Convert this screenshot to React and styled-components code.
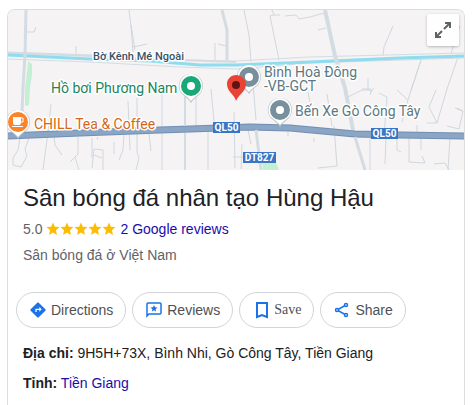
import React from "react";
import styled, { createGlobalStyle } from "styled-components";

const GlobalStyle = createGlobalStyle`
  * { box-sizing: border-box; }
  body {
    margin: 0;
    background: #fff;
    font-family: "Liberation Sans", Arial, sans-serif;
    font-size: 14px;
    color: #202124;
  }
`;

const Page = styled.main`
  display: flex;
  flex-direction: column;
  min-height: 100vh;
  padding: 9px 7px 0;
`;

const Card = styled.article`
  flex: 1;
  border: 1px solid #dadce0;
  border-bottom: 0;
  border-radius: 8px 8px 0 0;
  overflow: hidden;
`;

const MapFrame = styled.section`
  position: relative;
  height: 160px;
  background: #f5f3f4;
`;

const MapSvg = styled.svg`
  display: block;
  width: 100%;
  height: 100%;
  font-family: Roboto, sans-serif;
`;

const MapLabel = styled.text`
  font-size: ${(p) => p.$size || 14}px;
  font-weight: ${(p) => p.$weight || 400};
  fill: ${(p) => p.$color};
  stroke: #fff;
  stroke-width: 3px;
  stroke-linejoin: round;
  paint-order: stroke;
`;

const ShieldText = styled.text`
  font-size: 10px;
  font-weight: 700;
  fill: #fff;
  text-anchor: middle;
`;

const ExpandButton = styled.button`
  position: absolute;
  top: 4px;
  right: 5px;
  display: grid;
  place-items: center;
  width: 32px;
  height: 32px;
  padding: 0;
  border: 0;
  border-radius: 2px;
  background: rgba(255, 255, 255, 0.9);
  box-shadow: 0 1px 3px rgba(0, 0, 0, 0.25);
`;

const Summary = styled.header`
  padding: 12px 15px 0;
`;

const Title = styled.h1`
  margin: 0;
  font-size: 24px;
  font-weight: 400;
  line-height: 32px;
`;

const Rating = styled.div`
  display: flex;
  align-items: center;
  gap: 4px;
  margin-top: 2px;
  line-height: 26px;
  color: #5f6368;
`;

const Stars = styled.span`
  display: flex;
`;

const Category = styled.p`
  margin: 0;
  line-height: 26px;
  color: #5f6368;
`;

const TextLink = styled.a`
  color: #1a0dab;
  text-decoration: none;
`;

const Actions = styled.nav`
  display: flex;
  flex-wrap: wrap;
  gap: 6px;
  padding: 24px 8px 0;
`;

const ActionButton = styled.button`
  display: flex;
  align-items: center;
  gap: ${(p) => (p.$serif ? 2 : 5)}px;
  height: 36px;
  padding: 0 12px 0 ${(p) => (p.$serif ? 12 : 13)}px;
  border: 1px solid #d2d4d7;
  border-radius: 18px;
  background: #fff;
  color: #4d5156;
  font-family: ${(p) =>
    p.$serif ? '"Liberation Serif", "Times New Roman", serif' : "inherit"};
  font-size: 14px;
`;

const Facts = styled.section`
  padding: 10px 15px;
`;

const Fact = styled.p`
  margin: 0;
  line-height: 30px;
`;

const lightRoads = [
  "M25 32H34L36 27",
  "M76 54V46",
  "M129 10L131 26L133 52",
  "M131 25L135 50M133 47L147 44",
  "M215 60V43M218 44L226 46",
  "M244 10L249 35L251 62",
  "M272 10L274 15L270 16L279 60",
  "M274 15H280M285 16L296 15L299 19L310 17L324 13",
  "M318 30L326 28",
  "M393 26L384 47L383 56",
  "M460 26L455 40L451 54",
  "M421 60L411 90M458 57L447 89L437 123",
  "M368 78V90M362 89H371M374 88L370 92",
  "M348 97L354 94L362 90H372L370 95",
  "M397 90L408 100L421 60M408 100L402 122",
  "M379 93L387 97L384 136",
  "M436 90L429 107L437 123H427",
  "M455 108L462 111M447 126L459 129L463 111L457 108",
  "M51 104L48 132L43 170",
  "M20 138L18 150L13 158V165L21 167L27 156L25 149L29 138",
  "M54 137L55 145L62 155",
  "M78 137V154L70 162M75 157L79 170",
  "M92 138V158M97 137L98 140",
  "M92 168L94 149L103 150V170M94 155L102 158",
  "M114 142V154M124 135L123 150L119 160",
  "M128 101L130 150M137 98V152L139 158L136 170",
  "M149 134L151 151",
  "M162 88V170M208 130V170",
  "M196 90V127M211 89L214 121M234 112L235 168M242 144L241 169M233 157H243",
  "M253 83L256 120M248 130L251 144",
  "M288 130V136M308 92L310 102",
  "M327 94L332 126M334 126L337 166L318 168",
  "M370 138V170M386 137L385 164",
  "M397 137V150L401 152M409 137V162L425 163L422 156",
  "M421 137V150M450 138L448 170M434 164L445 163L449 170",
  "M314 138V142M417 125V132",
];

function MapPin({ x, y, color, children }) {
  return (
    <g transform={`translate(${x} ${y})`}>
      <path
        d="M0 17C-2 13-6 11-9 8C-16-1-10-12 0-12S16-1 9 8C6 11 2 13 0 17Z"
        fill="#b9c2c8"
      />
      <path
        d="M0 15C-2 12-6 10-9 7C-15-1-9-12 0-12S15-1 9 7C6 10 2 12 0 15Z"
        fill="#fff"
      />
      <circle r="10" fill={color} />
      {children || <circle r="4" fill="#fff" />}
    </g>
  );
}

function RoadShield({ x, y, width, children }) {
  return (
    <g>
      <rect x={x} y={y} width={width} height="11" fill="#3975c5" />
      <ShieldText x={x + width / 2} y={y + 9}>
        {children}
      </ShieldText>
    </g>
  );
}

function PlaceMap() {
  return (
    <MapSvg
      viewBox="8 10 456 160"
      preserveAspectRatio="xMidYMid slice"
      role="img"
      aria-label="Map"
    >
      <rect x="8" y="10" width="456" height="160" fill="#f5f3f4" />
      <path d="M28 61L32 64V75L30 88L29 105L25 106L25 88L27 72Z" fill="#c4efd3" />
      <path d="M262 160H275L279 170H263Z" fill="#c4efd3" />
      <g fill="none" stroke="#cfd8df" strokeWidth="1">
        {lightRoads.map((d) => (
          <path key={d} d={d} />
        ))}
      </g>
      <g fill="none">
        <path
          d="M8 52L92 55L180 60L236 61L310 57L464 53M8 59L90 62L180 67L236 69L310 63L464 58"
          stroke="#d3dce3"
          strokeWidth="1"
        />
        <path d="M8 53L92 56L180 60L236 62" stroke="#d3dce3" strokeWidth="2" />
        <path
          d="M8 55L90 59L150 61L200 65L236 65L310 62L400 58L464 56"
          stroke="#8fdcef"
          strokeWidth="3"
        />
        <path
          d="M8 136L80 133L160 130L250 127L290 128L355 134L400 135L464 136"
          stroke="#718eb5"
          strokeWidth="7"
        />
        <path
          d="M8 136L80 133L160 130L250 127L290 128L355 134L400 135L464 136"
          stroke="#8ba5c4"
          strokeWidth="5"
        />
      </g>
      <g fill="none" stroke="#d3dce3" strokeWidth="3">
        <path d="M26 10L25 55L23 88L22 112" />
        <path d="M222 10L227 30V60" />
        <path d="M325 10L335 56L345 88L353 130" strokeWidth="4" />
        <path d="M355 137L365 170" />
        <path d="M185 86V126M185 133V170" strokeWidth="2" />
        <path d="M256 130L261 170" />
      </g>

      <RoadShield x={213} y={122} width={27}>QL50</RoadShield>
      <RoadShield x={371} y={128} width={27}>QL50</RoadShield>
      <RoadShield x={243} y={152} width={33}>DT827</RoadShield>

      <MapLabel x="93" y="60" $size={11} $weight={500} $color="#3c5166">
        Bờ Kênh Mé Ngoài
      </MapLabel>
      <MapLabel x="51" y="93" $color="#21845c">Hồ bơi Phương Nam</MapLabel>
      <MapLabel $color="#5b7883">
        <tspan x="264" y="77">Bình Hoà Đông</tspan>
        <tspan x="264" y="91">-VB-GCT</tspan>
      </MapLabel>
      <MapLabel x="295" y="116" $color="#5b7883">Bến Xe Gò Công Tây</MapLabel>
      <MapLabel x="34" y="129" $color="#d56619">CHILL Tea &amp; Coffee</MapLabel>

      <MapPin x={249} y={77} color="#78909c" />
      <MapPin x={280} y={110} color="#78909c" />
      <MapPin x={191} y={86} color="#1aa877" />
      <MapPin x={18} y={122} color="#fb8428">
        <path d="M-5-5H3V1Q3 3 1 3H-3Q-5 3-5 1ZM-6 4H5V5H-6Z" fill="#fff" />
        <path d="M3-4H5V0H3" fill="none" stroke="#fff" />
      </MapPin>
      <path
        d="M236 101C235 95 227 92 227 84C227 79 231 75 236 75S246 79 246 84C246 92 238 95 236 101Z"
        fill="#ea4335"
      />
      <circle cx="236" cy="85" r="4" fill="#5f1414" />
    </MapSvg>
  );
}

function ExpandIcon() {
  return (
    <svg width="16" height="16" viewBox="0 0 16 16" fill="none" stroke="#5f6368" strokeWidth="2" aria-hidden="true">
      <path d="M10 1H15V6M15 1L9 7M6 15H1V10M1 15L7 9" />
    </svg>
  );
}

function Star() {
  return (
    <svg width="14" height="14" viewBox="-1 -1 26 26" fill="#fbbc04" aria-hidden="true">
      <path d="M12 18.3L19.4 23L17.5 14.3L24 8.5L15.4 7.7L12 0L8.6 7.7L0 8.5L6.5 14.3L4.6 23Z" />
    </svg>
  );
}

function DirectionsIcon() {
  return (
    <svg width="16" height="16" viewBox="0 0 24 24" fill="#1a73e8" aria-hidden="true">
      <path d="M23 10.9L13.1 1a1.6 1.6 0 0 0-2.2 0L1 10.9a1.6 1.6 0 0 0 0 2.2l9.9 9.9a1.6 1.6 0 0 0 2.2 0l9.9-9.9a1.6 1.6 0 0 0 0-2.2ZM14 14.5V12h-4v3H8v-4q0-1 1-1h5V7.5l3.5 3.5Z" />
    </svg>
  );
}

function ReviewsIcon() {
  return (
    <svg width="16" height="16" viewBox="0 0 16 16" aria-hidden="true">
      <path d="M1 14V2Q1 1 2 1H14Q15 1 15 2V11Q15 12 14 12H3Z" fill="none" stroke="#1a73e8" strokeWidth="1.5" />
      <path d="M8 3L9 5.3L11.5 5.5L9.6 7.2L10.2 9.6L8 8.3L5.8 9.6L6.4 7.2L4.5 5.5L7 5.3Z" fill="#1a73e8" />
    </svg>
  );
}

function SaveIcon() {
  return (
    <svg width="20" height="20" viewBox="0 0 20 20" fill="none" stroke="#1a73e8" strokeWidth="2" aria-hidden="true">
      <path d="M5 3H15V17L10 15L5 17Z" />
    </svg>
  );
}

function ShareIcon() {
  return (
    <svg width="16" height="16" viewBox="0 0 16 16" fill="none" stroke="#1a73e8" strokeWidth="1.5" aria-hidden="true">
      <path d="M12 3L3 8L12 13" />
      <circle cx="12" cy="3" r="1.5" fill="#fff" />
      <circle cx="3" cy="8" r="1.5" fill="#fff" />
      <circle cx="12" cy="13" r="1.5" fill="#fff" />
    </svg>
  );
}

export default function App() {
  return (
    <>
      <GlobalStyle />
      <Page>
        <Card>
          <MapFrame>
            <PlaceMap />
            <ExpandButton aria-label="Expand map">
              <ExpandIcon />
            </ExpandButton>
          </MapFrame>
          <Summary>
            <Title>Sân bóng đá nhân tạo Hùng Hậu</Title>
            <Rating>
              <span>5.0</span>
              <Stars role="img" aria-label="5 stars">
                {[1, 2, 3, 4, 5].map((n) => (
                  <Star key={n} />
                ))}
              </Stars>
              <TextLink href="#reviews">2 Google reviews</TextLink>
            </Rating>
            <Category>Sân bóng đá ở Việt Nam</Category>
          </Summary>
          <Actions aria-label="Place actions">
            <ActionButton><DirectionsIcon />Directions</ActionButton>
            <ActionButton><ReviewsIcon />Reviews</ActionButton>
            <ActionButton $serif><SaveIcon />Save</ActionButton>
            <ActionButton><ShareIcon />Share</ActionButton>
          </Actions>
          <Facts>
            <Fact>
              <b>Địa chỉ:</b> 9H5H+73X, Bình Nhi, Gò Công Tây, Tiền Giang
            </Fact>
            <Fact>
              <b>Tỉnh:</b> <TextLink href="#tien-giang">Tiền Giang</TextLink>
            </Fact>
          </Facts>
        </Card>
      </Page>
    </>
  );
}
